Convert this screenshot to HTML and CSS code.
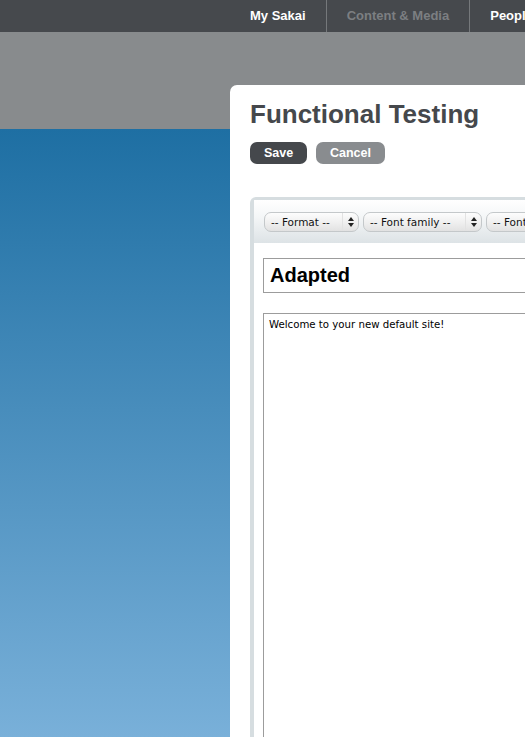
FILE: index.html
```html
<!DOCTYPE html>
<html>
<head>
<meta charset="utf-8">
<link rel="stylesheet" href="styles.css">
</head>
<body>
<nav class="topnav">
  <a class="nav-item active">My Sakai</a>
  <a class="nav-item dim">Content &amp; Media</a>
  <a class="nav-item active">People</a>
</nav>
<div class="stage">
  <main class="panel">
    <h1 class="title">Functional Testing</h1>
    <div class="actions">
      <button class="btn btn-save">Save</button>
      <button class="btn btn-cancel">Cancel</button>
    </div>
    <div class="editor">
      <div class="toolbar">
        <div class="sel sel-format"><span class="sel-label">-- Format --</span><span class="sel-arrow"><i class="up"></i><i class="down"></i></span></div>
        <div class="sel sel-family"><span class="sel-label">-- Font family --</span><span class="sel-arrow"><i class="up"></i><i class="down"></i></span></div>
        <div class="sel sel-size"><span class="sel-label">-- Font size --</span><span class="sel-arrow"><i class="up"></i><i class="down"></i></span></div>
      </div>
      <div class="editor-body">
        <div class="title-input">Adapted</div>
        <div class="textarea">Welcome to your new default site!</div>
      </div>
    </div>
  </main>
</div>
</body>
</html>
```
FILE: styles.css
```css
html, body {
  margin: 0;
  padding: 0;
  width: 525px;
  height: 737px;
  overflow: hidden;
  font-family: "Liberation Sans", Arial, sans-serif;
}
.topnav {
  height: 32px;
  background: #46494d;
  display: flex;
  align-items: stretch;
  padding-left: 230px;
  white-space: nowrap;
  overflow: hidden;
}
.nav-item {
  display: flex;
  align-items: center;
  padding: 0 20px 2px 20px;
  font-size: 13px;
  font-weight: bold;
  color: #ffffff;
  border-right: 1px solid #75787b;
  flex: none;
}
.nav-item.dim { color: #7c7f82; }
.stage {
  height: 705px;
  background: linear-gradient(to bottom, #888b8d 0, #888b8d 97px, #1e6fa3 97px, #79b0d9 100%);
  display: flex;
  padding-top: 53px;
  box-sizing: border-box;
}
.panel {
  margin-left: 230px;
  flex: 1;
  background: #ffffff;
  border-top-left-radius: 7px;
  padding: 14px 0 0 20px;
  overflow: hidden;
}
.title {
  margin: 0;
  font-size: 26px;
  line-height: 30px;
  font-weight: bold;
  color: #45484c;
  white-space: nowrap;
}
.actions {
  display: flex;
  gap: 9px;
  margin-top: 13px;
}
.btn {
  height: 22px;
  border: none;
  border-radius: 7px;
  padding: 0;
  font-family: "Liberation Sans", Arial, sans-serif;
  font-size: 12.5px;
  font-weight: bold;
  color: #ffffff;
}
.btn-save { width: 57px; background: #45484c; }
.btn-cancel { width: 69px; background: #898c8f; }
.editor {
  margin-top: 33px;
  border-left: 4px solid #d6dde0;
  border-top: 3px solid #d6dde0;
  border-top-left-radius: 6px;
  height: 600px;
}
.toolbar {
  height: 43px;
  background: linear-gradient(to bottom, #ffffff 0%, #f4f6f7 40%, #dde3e6 100%);
  display: flex;
  align-items: flex-start;
  gap: 4px;
  padding: 12px 0 0 10px;
  box-sizing: border-box;
  white-space: nowrap;
  overflow: hidden;
}
.sel {
  height: 20px;
  box-sizing: border-box;
  border: 1px solid #c4c8ca;
  border-radius: 7px;
  background: linear-gradient(to bottom, #fdfdfd 0%, #f0f0f0 50%, #e2e2e2 100%);
  display: flex;
  align-items: center;
  font-family: "DejaVu Sans", Verdana, sans-serif;
  font-size: 10.5px;
  color: #111;
  flex: none;
  overflow: hidden;
}
.sel-label { flex: 1; padding-left: 6px; }
.sel-arrow {
  width: 15px;
  border-left: 1px solid #e2e2e2;
  height: 100%;
  display: flex;
  flex-direction: column;
  align-items: center;
  justify-content: center;
  gap: 2px;
}
.sel-arrow i {
  display: block;
  width: 0;
  height: 0;
  border-left: 3px solid transparent;
  border-right: 3px solid transparent;
}
.sel-arrow .up { border-bottom: 4px solid #222; }
.sel-arrow .down { border-top: 4px solid #222; }
.sel-format { width: 95px; }
.sel-family { width: 119px; }
.sel-size { width: 110px; }
.editor-body {
  padding: 15px 0 0 9px;
  background: #ffffff;
}
.title-input {
  height: 35px;
  box-sizing: border-box;
  border: 1px solid #9c9c9c;
  border-right: none;
  font-size: 20px;
  font-weight: bold;
  color: #000;
  padding: 4px 0 0 6px;
  line-height: 25px;
}
.textarea {
  margin-top: 20px;
  height: 500px;
  border: 1px solid #9c9c9c;
  border-right: none;
  font-family: "DejaVu Sans", Verdana, sans-serif;
  font-size: 10.2px;
  color: #000;
  padding: 5px 0 0 5px;
}
```
